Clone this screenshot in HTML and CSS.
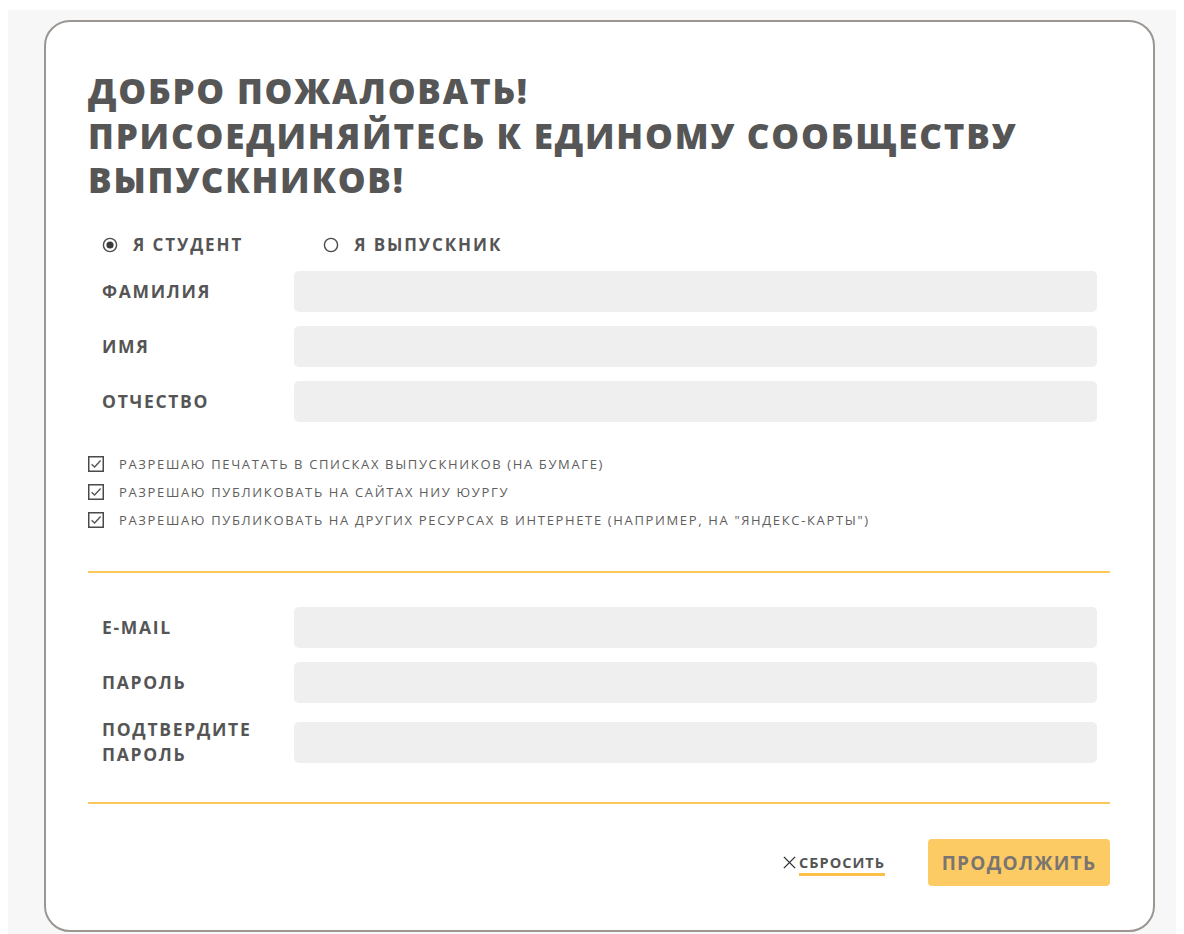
FILE: index.html
```html
<!DOCTYPE html>
<html lang="ru">
<head>
<meta charset="utf-8">
<title>Регистрация выпускника</title>
<link rel="stylesheet" href="styles.css">
</head>
<body>
<div class="page">
  <form class="card">
    <h1 class="title">ДОБРО ПОЖАЛОВАТЬ!<br>ПРИСОЕДИНЯЙТЕСЬ К ЕДИНОМУ СООБЩЕСТВУ<br>ВЫПУСКНИКОВ!</h1>

    <div class="fields">
      <div class="roles">
        <label class="role">
          <svg class="radio" viewBox="0 0 16 16" width="16" height="16"><circle cx="8" cy="8" r="6.6" fill="#fff" stroke="#4a4a4a" stroke-width="1.4"/><circle cx="8" cy="8" r="3.6" fill="#3a3a3a"/></svg>
          <span>Я СТУДЕНТ</span>
        </label>
        <label class="role">
          <svg class="radio" viewBox="0 0 16 16" width="16" height="16"><circle cx="8" cy="8" r="6.6" fill="#fff" stroke="#4a4a4a" stroke-width="1.4"/></svg>
          <span>Я ВЫПУСКНИК</span>
        </label>
      </div>

      <div class="row"><span class="label">ФАМИЛИЯ</span><input class="input" type="text"></div>
      <div class="row"><span class="label">ИМЯ</span><input class="input" type="text"></div>
      <div class="row"><span class="label">ОТЧЕСТВО</span><input class="input" type="text"></div>
    </div>

    <div class="consents">
      <label class="consent">
        <svg class="check" viewBox="0 0 16 16" width="16" height="16"><rect x="0.75" y="0.75" width="14.5" height="14.5" fill="#fff" stroke="#4a4a4a" stroke-width="1.5"/><path d="M3.6 8.2 L6.6 11 L12.6 4.6" fill="none" stroke="#555" stroke-width="1.4"/></svg>
        <span>РАЗРЕШАЮ ПЕЧАТАТЬ В СПИСКАХ ВЫПУСКНИКОВ (НА БУМАГЕ)</span>
      </label>
      <label class="consent">
        <svg class="check" viewBox="0 0 16 16" width="16" height="16"><rect x="0.75" y="0.75" width="14.5" height="14.5" fill="#fff" stroke="#4a4a4a" stroke-width="1.5"/><path d="M3.6 8.2 L6.6 11 L12.6 4.6" fill="none" stroke="#555" stroke-width="1.4"/></svg>
        <span>РАЗРЕШАЮ ПУБЛИКОВАТЬ НА САЙТАХ НИУ ЮУРГУ</span>
      </label>
      <label class="consent">
        <svg class="check" viewBox="0 0 16 16" width="16" height="16"><rect x="0.75" y="0.75" width="14.5" height="14.5" fill="#fff" stroke="#4a4a4a" stroke-width="1.5"/><path d="M3.6 8.2 L6.6 11 L12.6 4.6" fill="none" stroke="#555" stroke-width="1.4"/></svg>
        <span>РАЗРЕШАЮ ПУБЛИКОВАТЬ НА ДРУГИХ РЕСУРСАХ В ИНТЕРНЕТЕ (НАПРИМЕР, НА "ЯНДЕКС-КАРТЫ")</span>
      </label>
    </div>

    <hr class="divider">

    <div class="fields">
      <div class="row"><span class="label">E-MAIL</span><input class="input" type="email"></div>
      <div class="row"><span class="label">ПАРОЛЬ</span><input class="input" type="password"></div>
      <div class="row"><span class="label">ПОДТВЕРДИТЕ<br>ПАРОЛЬ</span><input class="input" type="password"></div>
    </div>

    <hr class="divider divider-bottom">

    <div class="actions">
      <button class="reset" type="reset">
        <svg class="cross" viewBox="0 0 16 16" width="16" height="16"><path d="M2 2 L14 14 M14 2 L2 14" stroke="#333" stroke-width="1.5" fill="none"/></svg>
        <span class="reset-text">СБРОСИТЬ</span>
      </button>
      <button class="submit" type="submit">ПРОДОЛЖИТЬ</button>
    </div>
  </form>
</div>
</body>
</html>
```

FILE: styles.css
```css
html, body {
  background: #ffffff;
}

body {
  margin: 10px 8px 0 8px;
  font-family: "Open Sans", "Liberation Sans", sans-serif;
  color: #555555;
}

.page {
  background: #f7f7f7;
  padding: 10px 21px 4px 36px;
  min-height: 924px;
  box-sizing: border-box;
}

.card {
  background: #ffffff;
  border: 2px solid #9b9692;
  border-radius: 26px;
  padding: 47px 43px 44px 42px;
  display: flex;
  flex-direction: column;
}

.title {
  margin: 0;
  font-size: 35px;
  line-height: 44.5px;
  font-weight: 800;
  color: #565656;
  letter-spacing: 1.8px;
}

.fields {
  padding: 0 13px 0 14px;
  display: flex;
  flex-direction: column;
  gap: 14px;
}

.roles {
  display: flex;
  align-items: center;
  height: 26px;
  margin-top: 29px;
  margin-bottom: -1px;
}

.role {
  display: flex;
  align-items: center;
  gap: 15px;
  font-size: 17px;
  font-weight: 700;
  letter-spacing: 1.9px;
  color: #555;
}

.role + .role {
  margin-left: 80px;
}

.radio {
  display: block;
}

.row {
  display: flex;
  align-items: center;
}

.label {
  width: 192px;
  flex: none;
  font-size: 17.5px;
  font-weight: 700;
  line-height: 25px;
  letter-spacing: 1.7px;
  color: #555555;
}

.input {
  flex: 1;
  height: 41px;
  border: none;
  border-radius: 5px;
  background: #efefef;
  box-sizing: border-box;
  margin: 0;
  padding: 0 14px;
  font: inherit;
  outline: none;
}

.consents {
  margin-top: 28px;
  display: flex;
  flex-direction: column;
}

.consent {
  display: flex;
  align-items: center;
  gap: 15px;
  height: 28px;
  font-size: 13px;
  letter-spacing: 1.65px;
  color: #5e5e5e;
}

.check {
  display: block;
  flex: none;
}

.divider {
  border: none;
  height: 2px;
  background: #fcc85a;
  margin: 37.5px 0 34px 0;
}

.divider-bottom {
  margin-top: 35px;
  margin-bottom: 35px;
}

.actions {
  display: flex;
  justify-content: flex-end;
  align-items: center;
  gap: 43px;
}

.reset {
  display: flex;
  align-items: center;
  gap: 2px;
  background: none;
  border: none;
  padding: 0;
  font: inherit;
  font-size: 14.5px;
  font-weight: 700;
  letter-spacing: 1px;
  color: #555;
  cursor: pointer;
}

.cross {
  display: block;
  width: 15px;
  height: 15px;
}

.reset-text {
  border-bottom: 3px solid #fcc04a;
  padding-bottom: 1px;
  line-height: 18px;
  margin-top: 4px;
}

.submit {
  width: 182px;
  height: 47px;
  background: #fdcb64;
  border: none;
  border-radius: 4px;
  font: inherit;
  font-size: 19px;
  font-weight: 700;
  letter-spacing: 1.3px;
  color: #7a7570;
  padding: 0;
  cursor: pointer;
}
```
